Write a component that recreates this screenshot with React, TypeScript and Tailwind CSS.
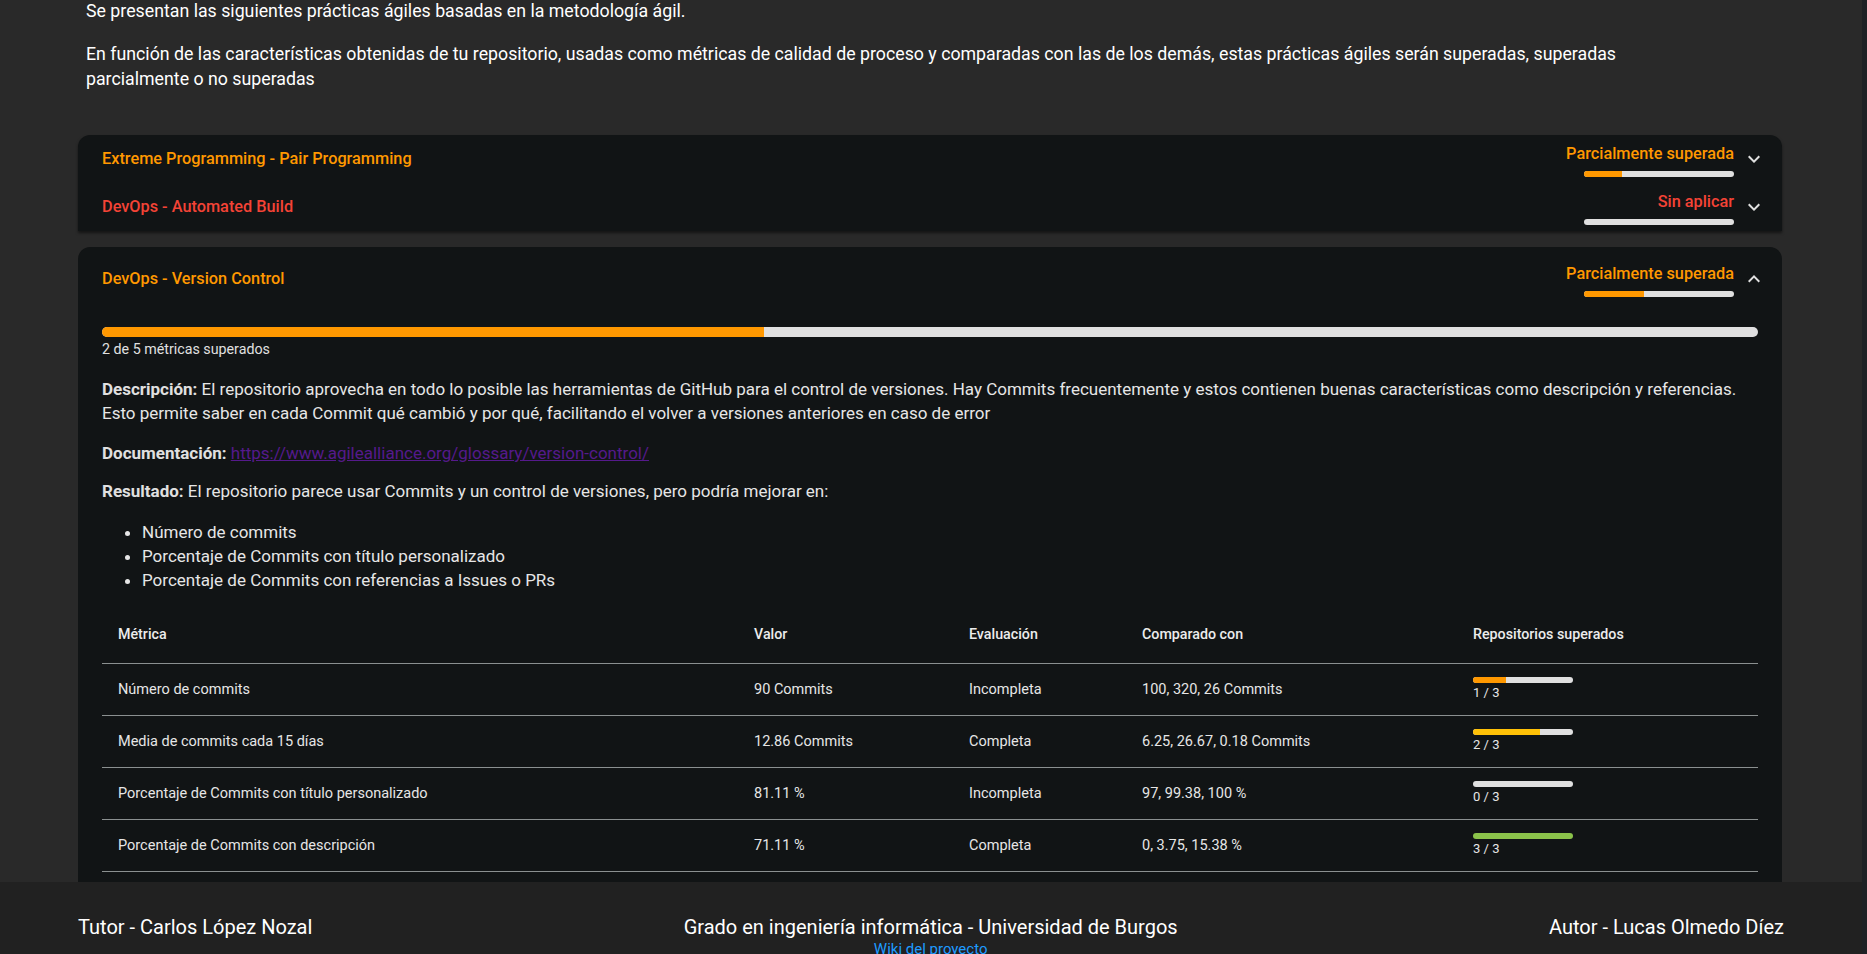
interface Practice {
  title: string;
  status: string;
  color: 'orange' | 'red';
  fill: number;
  expanded?: boolean;
}

const practicesTop: Practice[] = [
  { title: 'Extreme Programming - Pair Programming', status: 'Parcialmente superada', color: 'orange', fill: 25 },
  { title: 'DevOps - Automated Build', status: 'Sin aplicar', color: 'red', fill: 0 },
];

const rows = [
  { name: 'Número de commits', value: '90 Commits', evaluation: 'Incompleta', compared: '100, 320, 26 Commits', passed: 1, bar: 'bg-[#ff9800]' },
  { name: 'Media de commits cada 15 días', value: '12.86 Commits', evaluation: 'Completa', compared: '6.25, 26.67, 0.18 Commits', passed: 2, bar: 'bg-[#ffc107]' },
  { name: 'Porcentaje de Commits con título personalizado', value: '81.11 %', evaluation: 'Incompleta', compared: '97, 99.38, 100 %', passed: 0, bar: 'bg-[#e0e0e0]' },
  { name: 'Porcentaje de Commits con descripción', value: '71.11 %', evaluation: 'Completa', compared: '0, 3.75, 15.38 %', passed: 3, bar: 'bg-[#8bc34a]' },
  { name: 'Porcentaje de Commits con referencias a Issues o PRs', value: '0 %', evaluation: 'Incompleta', compared: '0, 1.25, 3.85 %', passed: 1, bar: 'bg-[#ff9800]' },
];

function ExpandIcon({ up }: { up?: boolean }) {
  return (
    <svg viewBox="0 0 24 24" className={`w-6 h-6 fill-[#e0e0e0] ${up ? 'rotate-180' : ''}`}>
      <path d="M16.59 8.59 12 13.17 7.41 8.59 6 10l6 6 6-6z" />
    </svg>
  );
}

function StatusBlock({ p }: { p: Practice }) {
  const text = p.color === 'orange' ? 'text-[#ff9800]' : 'text-[#f44336]';
  return (
    <div className="flex items-center gap-2">
      <div className="flex flex-col items-end gap-[5px]">
        <span className={`text-[16.3px] leading-[24px] font-medium ${text}`}>{p.status}</span>
        <div className="w-[150px] h-[6px] rounded-full bg-[#e0e0e0] overflow-hidden">
          <div className="h-full bg-[#ff9800]" style={{ width: `${p.fill}%` }} />
        </div>
      </div>
      <ExpandIcon up={p.expanded} />
    </div>
  );
}

function Summary({ p, tall }: { p: Practice; tall?: boolean }) {
  const text = p.color === 'orange' ? 'text-[#ff9800]' : 'text-[#f44336]';
  return (
    <div className={`flex items-center justify-between pl-6 pr-4 ${tall ? 'h-[64px]' : 'h-[48px]'}`}>
      <span className={`text-[16.3px] leading-[24px] font-medium ${text}`}>{p.title}</span>
      <StatusBlock p={p} />
    </div>
  );
}

export default function App() {
  const versionControl: Practice = {
    title: 'DevOps - Version Control',
    status: 'Parcialmente superada',
    color: 'orange',
    fill: 40,
    expanded: true,
  };

  return (
    <div className="min-h-screen bg-[#292929] font-[Roboto,sans-serif] text-white overflow-hidden">
      <main className="pl-[78px] pr-[85px] pb-[120px]">
        <div className="pl-2 -mt-[1px] text-[17.75px] leading-[25px] max-w-[1600px]">
          <p>Se presentan las siguientes prácticas ágiles basadas en la metodología ágil.</p>
          <p className="mt-[18px]">
            En función de las características obtenidas de tu repositorio, usadas como métricas de calidad de proceso y
            comparadas con las de los demás, estas prácticas ágiles serán superadas, superadas parcialmente o no superadas
          </p>
        </div>

        <div className="mt-[43px] bg-[#111415] rounded-t-xl shadow-[0_2px_3px_rgba(0,0,0,0.5)]">
          {practicesTop.map((p) => (
            <Summary key={p.title} p={p} />
          ))}
        </div>

        <div className="mt-4 bg-[#111415] rounded-t-xl">
          <Summary p={versionControl} tall />
          <div className="px-6 pt-4 pb-6 text-[#e6e6e6]">
            <div className="h-[10px] rounded-full bg-[#e0e0e0] overflow-hidden">
              <div className="h-full w-[40%] bg-[#ff9800]" />
            </div>
            <p className="text-[14.25px] leading-[20px] mt-[2px] text-[#e0e0e0]">2 de 5 métricas superados</p>

            <div className="text-[17px] leading-[24px]">
              <p className="mt-[18px]">
                <span className="font-bold text-[#e0e0e0]">Descripción:</span> El repositorio aprovecha en todo lo posible
                las herramientas de GitHub para el control de versiones. Hay Commits frecuentemente y estos contienen buenas
                características como descripción y referencias. Esto permite saber en cada Commit qué cambió y por qué,
                facilitando el volver a versiones anteriores en caso de error
              </p>
              <p className="mt-4">
                <span className="font-bold text-[#e0e0e0]">Documentación:</span>{' '}
                <a className="text-[#551a8b] underline" href="#">
                  https://www.agilealliance.org/glossary/version-control/
                </a>
              </p>
              <p className="mt-[14px]">
                <span className="font-bold text-[#e0e0e0]">Resultado:</span> El repositorio parece usar Commits y un control
                de versiones, pero podría mejorar en:
              </p>
              <ul className="mt-[17px] pl-10 list-disc">
                <li>Número de commits</li>
                <li>Porcentaje de Commits con título personalizado</li>
                <li>Porcentaje de Commits con referencias a Issues o PRs</li>
              </ul>
            </div>

            <div className="mt-[15px] text-[14.5px]">
              <div className="grid grid-cols-[636px_215px_173px_331px_1fr] h-[57px] items-center border-b border-[#8b9090] font-medium text-[14.25px] text-[#ececec]">
                <span className="pl-4">Métrica</span>
                <span className="pl-4">Valor</span>
                <span className="pl-4">Evaluación</span>
                <span className="pl-4">Comparado con</span>
                <span className="pl-4">Repositorios superados</span>
              </div>
              {rows.map((r) => (
                <div
                  key={r.name}
                  className="grid grid-cols-[636px_215px_173px_331px_1fr] h-[52px] items-center border-b border-[#8b9090] text-[#e6e6e6]"
                >
                  <span className="pl-4">{r.name}</span>
                  <span className="pl-4">{r.value}</span>
                  <span className="pl-4">{r.evaluation}</span>
                  <span className="pl-4">{r.compared}</span>
                  <div className="pl-4 flex flex-col">
                    <div className="w-[100px] h-[6px] rounded-full bg-[#e0e0e0] overflow-hidden">
                      <div className={`h-full ${r.bar}`} style={{ width: `${(r.passed / 3) * 100}%` }} />
                    </div>
                    <span className="text-[13px] leading-[18px] mt-[1px]">{r.passed} / 3</span>
                  </div>
                </div>
              ))}
            </div>
          </div>
        </div>
      </main>

      <footer className="fixed bottom-0 left-0 right-[5px] h-[72px] bg-[#212121] overflow-hidden">
        <div className="flex justify-between items-start px-[78px] pt-[33px] text-[20px] leading-[24px] text-white">
          <span>Tutor - Carlos López Nozal</span>
          <div className="flex flex-col items-center">
            <span>Grado en ingeniería informática - Universidad de Burgos</span>
            <a href="#" className="text-[15px] leading-[20px] text-[#1e9bff]">
              Wiki del proyecto
            </a>
          </div>
          <span>Autor - Lucas Olmedo Díez</span>
        </div>
      </footer>
      <div className="fixed top-0 right-0 w-[5px] h-full bg-[#1e2125]" />
    </div>
  );
}
